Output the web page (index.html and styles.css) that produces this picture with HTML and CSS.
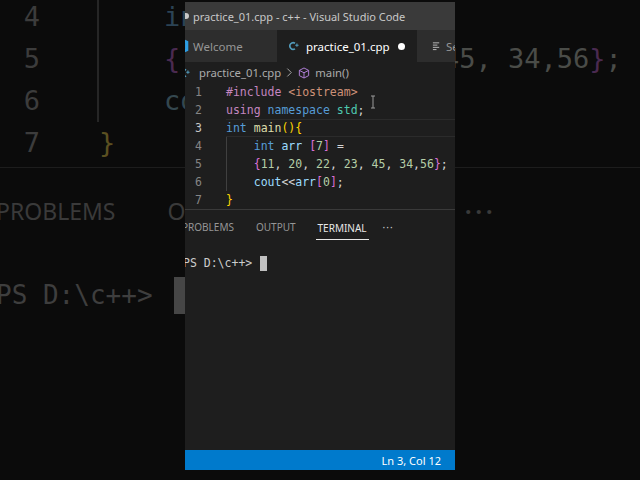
FILE: index.html
```html
<!doctype html>
<html lang="en">
    <head>
        <meta charset="UTF-8" />
        <meta name="viewport" content="width=device-width, initial-scale=1.0" />
        <title>practice_01.cpp - c++ - Visual Studio Code</title>
        <link rel="stylesheet" href="styles.css">
    </head>
    <body>
        <!-- Left slice of the zoomed editor behind the window -->
        <div class="side side-left">
            <div class="bg-code">
                <div class="bg-row guide">
                    <span class="bg-num">4</span>
                    <span class="bg-text">    <span class="bg-kw">in</span></span>
                </div>
                <div class="bg-row guide">
                    <span class="bg-num">5</span>
                    <span class="bg-text">    <span class="bg-br">{</span></span>
                </div>
                <div class="bg-row guide">
                    <span class="bg-num">6</span>
                    <span class="bg-text">    <span class="bg-var">co</span></span>
                </div>
                <div class="bg-row">
                    <span class="bg-num">7</span>
                    <span class="bg-text"><span class="bg-gold">}</span></span>
                </div>
            </div>
            <div class="bg-tabs">
                <span>PROBLEMS</span>
                <span>O</span>
            </div>
            <div class="bg-term">
                <span class="bg-prompt">PS D:\c++&gt;</span>
                <span class="bg-cursor"></span>
            </div>
        </div>

        <!-- The VS Code window -->
        <div class="window">
            <div class="titlebar">
                <span class="title-dot"></span>
                <span>practice_01.cpp - c++ - Visual Studio Code</span>
            </div>

            <div class="tabs">
                <div class="tab tab-welcome">
                    <svg class="logo" viewBox="0 0 16 16" width="14" height="14">
                        <path d="M11.5 0.8 L15.2 2.6 V13.4 L11.5 15.2 L4.6 9 L2 11 L0.8 10.4 V5.6 L2 5 L4.6 7 Z M11.5 4.6 L7.4 8 L11.5 11.4 Z" fill="#2d9fe6" fill-rule="evenodd"/>
                    </svg>
                    <span>Welcome</span>
                </div>
                <div class="tab tab-active">
                    <svg class="cpp" viewBox="0 0 12 12" width="10" height="10">
                        <path d="M7.2 2.6 A4 4 0 1 0 7.2 9.4" fill="none" stroke="#519aba" stroke-width="2"/>
                        <path d="M9.5 3 V7 M7.5 5 H11.5" stroke="#519aba" stroke-width="1.3"/>
                    </svg>
                    <span>practice_01.cpp</span>
                    <span class="dirty"></span>
                </div>
                <div class="tab tab-settings">
                    <svg viewBox="0 0 10 10" width="9" height="10">
                        <path d="M1 1.5 H8 M1 4 H6 M1 6.5 H8 M1 9 H5" stroke="#c5c5c5" stroke-width="1"/>
                    </svg>
                    <span class="tab-label">Se</span>
                </div>
            </div>

            <div class="breadcrumb">
                <svg class="cpp crumb-icon" viewBox="0 0 12 12" width="10" height="10">
                    <path d="M7.2 2.6 A4 4 0 1 0 7.2 9.4" fill="none" stroke="#519aba" stroke-width="2"/>
                    <path d="M9.5 3 V7 M7.5 5 H11.5" stroke="#519aba" stroke-width="1.3"/>
                </svg>
                <span>practice_01.cpp</span>
                <svg class="chevron" viewBox="0 0 8 12" width="7" height="11">
                    <path d="M1.5 1.5 L6 6 L1.5 10.5" fill="none" stroke="#a9a9a9" stroke-width="1.1"/>
                </svg>
                <svg class="cube" viewBox="0 0 16 16" width="12" height="12">
                    <path d="M8 1.3 L14.2 4.5 V11.5 L8 14.7 L1.8 11.5 V4.5 Z M1.8 4.5 L8 7.7 L14.2 4.5 M8 7.7 V14.7" fill="none" stroke="#b180d7" stroke-width="1.3" stroke-linejoin="round"/>
                </svg>
                <span>main()</span>
            </div>

            <div class="editor">
                <div class="line"><span class="ln">1</span><span class="code"><span class="kw2">#include</span> <span class="str">&lt;iostream&gt;</span></span></div>
                <div class="line"><span class="ln">2</span><span class="code"><span class="kw2">using</span> <span class="kw">namespace</span> <span class="ty">std</span>;</span></div>
                <div class="line current"><span class="ln">3</span><span class="code"><span class="kw">int</span> <span class="fn">main</span><span class="b1">(){</span></span></div>
                <div class="line guide"><span class="ln">4</span><span class="code">    <span class="kw">int</span> <span class="var">arr</span> <span class="b2">[</span><span class="num">7</span><span class="b2">]</span> =</span></div>
                <div class="line guide"><span class="ln">5</span><span class="code">    <span class="b2">{</span><span class="num">11</span>, <span class="num">20</span>, <span class="num">22</span>, <span class="num">23</span>, <span class="num">45</span>, <span class="num">34</span>,<span class="num">56</span><span class="b2">}</span>;</span></div>
                <div class="line guide"><span class="ln">6</span><span class="code">    <span class="var">cout</span>&lt;&lt;<span class="var">arr</span><span class="b2">[</span><span class="num">0</span><span class="b2">]</span>;</span></div>
                <div class="line"><span class="ln">7</span><span class="code"><span class="b1">}</span></span></div>
                <svg class="ibeam" viewBox="0 0 6 14" width="6" height="14">
                    <path d="M1 1 H5 M3 1 V13 M1 13 H5" fill="none" stroke="#9a9a9a" stroke-width="1"/>
                </svg>
            </div>

            <div class="panel">
                <div class="panel-tabs">
                    <span class="ptab first">PROBLEMS</span>
                    <span class="ptab">OUTPUT</span>
                    <span class="ptab active">TERMINAL</span>
                    <span class="ptab more">···</span>
                </div>
                <div class="terminal">
                    <span>PS D:\c++&gt;</span>
                    <span class="term-cursor"></span>
                </div>
            </div>

            <div class="statusbar">Ln 3, Col 12</div>
        </div>

        <!-- Right slice of the zoomed editor -->
        <div class="side side-right">
            <div class="bg-code">
                <div class="bg-row"></div>
                <div class="bg-row">
                    <span class="bg-tail"><span class="bg-n">45, 34,56</span><span class="bg-br">}</span><span class="bg-n">;</span></span>
                </div>
                <div class="bg-row"></div>
                <div class="bg-row"></div>
            </div>
            <div class="bg-tabs">
                <span class="bg-more">···</span>
            </div>
        </div>
    </body>
</html>
```

FILE: styles.css
```css
/* General */
body {
    margin: 0;
    width: 640px;
    height: 480px;
    overflow: hidden;
    display: flex;
    background-color: #0b0b0b;
    font-family: "Noto Sans", sans-serif;
}

/* Zoomed editor slices on each side */
.side {
    width: 185px;
    flex-shrink: 0;
    overflow: hidden;
    font-family: "DejaVu Sans Mono", monospace;
    font-size: 27px;
}

.bg-code {
    margin-top: -4px;
    padding-bottom: 3px;
    border-bottom: 1px solid #1d1d1d;
}

.bg-row {
    display: flex;
    height: 42px;
    line-height: 42px;
    white-space: pre;
}

.bg-num {
    width: 40px;
    flex-shrink: 0;
    text-align: right;
    color: #3c3c3c;
}

.bg-text {
    margin-left: 57px;
    padding-left: 2px;
    color: #3a3a3a;
}

.bg-row.guide .bg-text {
    box-shadow: inset 2px 0 #262626;
}

.bg-tail {
    margin-left: -12px;
}

.bg-kw { color: #2b4355; }
.bg-var { color: #34474f; }
.bg-br { color: #4a2a50; }
.bg-n { color: #4a4c48; }
.bg-gold { color: #5b5021; }

.bg-tabs {
    height: 86px;
    display: flex;
    align-items: center;
    gap: 52px;
    margin-left: -4px;
    font-family: "Noto Sans", sans-serif;
    font-size: 23px;
    color: #3a3a3a;
    white-space: nowrap;
}

.side-right .bg-tabs {
    margin-left: 10px;
}

.bg-more {
    letter-spacing: 4px;
    font-weight: bold;
}

.bg-term {
    height: 82px;
    display: flex;
    align-items: center;
    margin-left: -4px;
    font-size: 26px;
    color: #3e3e3e;
    white-space: pre;
}

.bg-prompt {
    flex-shrink: 0;
}

.bg-cursor {
    width: 12px;
    height: 37px;
    flex-shrink: 0;
    margin-left: 21px;
    background-color: #464646;
}

/* Window */
.window {
    width: 270px;
    height: 468px;
    margin-top: 2px;
    flex-shrink: 0;
    overflow: hidden;
    display: flex;
    flex-direction: column;
    background-color: #1e1e1e;
    font-size: 12px;
    color: #cccccc;
}

.titlebar {
    height: 28px;
    flex-shrink: 0;
    display: flex;
    align-items: center;
    gap: 4px;
    background-color: #3a3a3a;
    color: #c8c8c8;
    font-size: 11px;
    white-space: nowrap;
}

.title-dot {
    width: 6px;
    height: 6px;
    margin-left: -2px;
    border-radius: 50%;
    background-color: #c8c8c8;
}

/* Tabs */
.tabs {
    height: 32px;
    flex-shrink: 0;
    display: flex;
    background-color: #252526;
    white-space: nowrap;
}

.tab {
    display: flex;
    align-items: center;
    font-size: 11.5px;
}

.tab-welcome {
    width: 92px;
    flex-shrink: 0;
    background-color: #2d2d2d;
    color: #969696;
}

.tab-welcome .logo {
    margin-left: -10px;
    margin-right: 4px;
}

.tab-active {
    width: 140px;
    flex-shrink: 0;
    padding-left: 12px;
    box-sizing: border-box;
    background-color: #1e1e1e;
    color: #ffffff;
}

.tab-active .cpp {
    margin-right: 7px;
}

.dirty {
    width: 7px;
    height: 7px;
    margin-left: 8px;
    border-radius: 50%;
    background-color: #ffffff;
}

.tab-settings {
    flex: 1;
    padding-left: 15px;
    gap: 5px;
    background-color: #2d2d2d;
    color: #969696;
}

/* Breadcrumb */
.breadcrumb {
    height: 21px;
    flex-shrink: 0;
    display: flex;
    align-items: center;
    color: #ababab;
    font-size: 11.3px;
    white-space: nowrap;
}

.crumb-icon {
    margin-left: -5px;
    margin-right: 9px;
}

.chevron {
    margin: 0 5px;
}

.cube {
    margin-right: 5px;
}

/* Editor */
.editor {
    position: relative;
    flex-shrink: 0;
    font-family: "DejaVu Sans Mono", monospace;
    font-size: 11.5px;
}

.line {
    display: flex;
    height: 18px;
    line-height: 18px;
    white-space: pre;
}

.ln {
    width: 17px;
    flex-shrink: 0;
    text-align: right;
    color: #858585;
}

.code {
    flex: 1;
    margin-left: 24px;
    color: #d4d4d4;
}

.line.current .ln {
    color: #c6c6c6;
}

.line.current .code {
    box-shadow: inset 0 1px #2b2b2b, inset 0 -1px #2b2b2b;
}

.line.guide .code {
    box-shadow: inset 1px 0 #404040;
}

.kw { color: #569cd6; }
.kw2 { color: #c586c0; }
.str { color: #ce9178; }
.ty { color: #4ec9b0; }
.fn { color: #dcdcaa; }
.var { color: #9cdcfe; }
.num { color: #b5cea8; }
.b1 { color: #ffd700; }
.b2 { color: #da70d6; }

.ibeam {
    position: absolute;
    left: 185px;
    top: 12px;
}

/* Panel */
.panel {
    flex: 1;
    border-top: 1px solid #3a3a3a;
}

.panel-tabs {
    height: 34px;
    display: flex;
    align-items: center;
    gap: 22px;
    font-size: 10px;
    color: #969696;
    white-space: nowrap;
}

.ptab.first {
    margin-left: -3px;
}

.ptab.active {
    color: #e7e7e7;
    padding: 0 2px;
    margin-left: -2px;
    line-height: 22px;
    margin-top: 2px;
    border-bottom: 1px solid #e7e7e7;
}

.ptab.more {
    margin-left: -8px;
    letter-spacing: 1px;
    color: #cccccc;
}

.terminal {
    display: flex;
    align-items: center;
    height: 22px;
    margin-top: 8px;
    margin-left: -2px;
    font-family: "DejaVu Sans Mono", monospace;
    font-size: 11.5px;
    color: #cccccc;
}

.term-cursor {
    width: 7px;
    height: 15px;
    margin-left: 8px;
    background-color: #c0c0c0;
}

/* Status bar */
.statusbar {
    height: 20px;
    flex-shrink: 0;
    display: flex;
    align-items: center;
    justify-content: flex-end;
    padding-right: 14px;
    background-color: #007acc;
    color: #ffffff;
    font-size: 11px;
}
```
